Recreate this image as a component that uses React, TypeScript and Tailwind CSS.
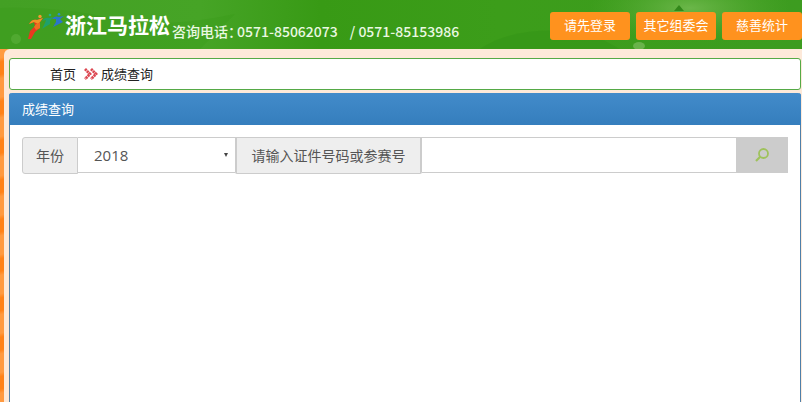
import React from "react";

const navItems = ["请先登录", "其它组委会", "慈善统计"];

function Runners() {
  return (
    <svg viewBox="0 0 37 28" className="h-7 w-[37px] shrink-0" aria-hidden="true">
      <circle cx="12" cy="4.5" r="1.7" fill="#f09a30" />
      <path d="M1 12 C3 8 6 7 9 8 L15 6 L12 10 L12 16 L7 20 L3 27 L0 27 L2 19 L7 14 L6 10 Z" fill="#e8391f" />
      <path d="M1 12 C3 8 6 7 9 8 L15 6 L12 10 L10 12 L6 10 Z" fill="#ee9426" />
      <path d="M8 12 L12 11 L12 16 L8 18 L6 15 Z" fill="#ec7020" />
      <circle cx="22" cy="3" r="1.3" fill="#25b088" />
      <path d="M14 9 C16 6 19 5 21 6 L25 5 L22 9 L22 12 L17 15 L14 17 L17 11 L18 8 Z" fill="#1fa06c" />
      <circle cx="31" cy="2.2" r="1.3" fill="#2b90c8" />
      <path d="M24 7 C26 4 29 4 31 5 L36 4 L32 7 L35 10 L31 12 L25 15 L28 10 L28 7 Z" fill="#2a74cc" />
    </svg>
  );
}

function ChevronsIcon() {
  return (
    <svg viewBox="0 0 14 12" className="h-3 w-3.5" aria-hidden="true" fill="none" stroke="#dc4650" strokeWidth="2.8" strokeDasharray="2.2 0.5">
      <path d="M1 1 L6 6 L1 11" />
      <path d="M7 1 L12 6 L7 11" />
    </svg>
  );
}

function HeaderArt() {
  return (
    <svg className="absolute inset-0 h-full w-full" viewBox="0 0 802 49" preserveAspectRatio="none" aria-hidden="true">
      <defs>
        <linearGradient id="headerBase" x1="0" x2="1" y1="0" y2="0">
          <stop offset="0" stopColor="#43a024" />
          <stop offset="0.25" stopColor="#46a426" />
          <stop offset="0.4" stopColor="#389a15" />
          <stop offset="0.62" stopColor="#3c9d1a" />
          <stop offset="1" stopColor="#3d9c20" />
        </linearGradient>
        <radialGradient id="headerGlow">
          <stop offset="0" stopColor="#70b94e" stopOpacity="0.9" />
          <stop offset="1" stopColor="#55aa32" stopOpacity="0" />
        </radialGradient>
      </defs>
      <rect width="802" height="49" fill="url(#headerBase)" />
      <path d="M0 8 Q60 6 110 18 T235 14 L200 49 H0 Z" fill="#349615" opacity="0.25" />
      <ellipse cx="690" cy="8" rx="100" ry="34" fill="url(#headerGlow)" />
      <path d="M480 49 Q515 24 590 33 L620 49 Z" fill="#2f8e13" opacity="0.3" />
      <path d="M674 11 L679 5 L684 11 Z" fill="#32881a" />
      <ellipse cx="639" cy="46" rx="6" ry="4" fill="#69b34a" />
      <circle cx="16" cy="39" r="5" fill="#5bb03c" opacity="0.6" />
    </svg>
  );
}

export default function App() {
  return (
    <div className="flex min-h-screen flex-col bg-[#ff9433] bg-[repeating-linear-gradient(165deg,#ff9a40_0px,#ff9a40_18px,#ff8218_22px,#ff8218_34px,#ff9a40_38px)] font-['Noto_Sans_CJK_SC',sans-serif]">
      <header className="relative h-[49px] shrink-0 overflow-hidden">
        <HeaderArt />
        <div className="relative flex h-full items-start pl-7 text-white">
          <div className="pt-3">
            <Runners />
          </div>
          <h1 className="w-[107px] pt-2 text-[21px] leading-8 font-bold whitespace-nowrap">浙江马拉松</h1>
          <p className="flex pt-5 text-[14px] leading-[22px] font-medium whitespace-nowrap text-[#eaf8e2]">
            <span className="w-[65px]">咨询电话：</span>
            <span className="pr-3">0571-85062073</span>
            <span>/ 0571-85153986</span>
          </p>
          <nav className="ml-auto flex shrink-0 gap-1.5 pt-3">
            {navItems.map((item) => (
              <button key={item} type="button" className="h-7 w-20 rounded-[3px] bg-[#ff921e] pb-0.5 text-[13px] leading-[26px] whitespace-nowrap text-white">
                {item}
              </button>
            ))}
          </nav>
        </div>
      </header>

      <main className="ml-1 flex grow flex-col gap-[3px] rounded-tl-md bg-[#fde9d9] pt-[9px] pr-px pl-[5px]">
        <nav aria-label="位置" className="flex h-8 shrink-0 items-center rounded-[3px] border border-[#55aa46] bg-white pl-10 text-[13px] text-[#222]">
          <a href="#home">首页</a>
          <span className="pr-[3px] pl-2">
            <ChevronsIcon />
          </span>
          <a href="#results">成绩查询</a>
        </nav>

        <section className="flex grow flex-col rounded-t-[3px] border-x border-[#4f7fa8] bg-white">
          <h2 className="-mx-px h-8 shrink-0 rounded-t-[3px] bg-linear-to-b from-[#428bca] to-[#357ebd] pl-[13px] text-[13px] leading-8 text-white">成绩查询</h2>
          <form className="flex items-start p-3 text-[#555]" onSubmit={(e) => e.preventDefault()}>
            <label htmlFor="year" className="h-[37px] w-14 shrink-0 rounded-l-[3px] border border-[#ccc] bg-[#eee] text-center text-[14px] leading-[34px]">
              年份
            </label>
            <div className="relative w-[157px] shrink-0">
              <select id="year" defaultValue="2018" className="h-9 w-full appearance-none border-y border-[#ccc] bg-white pl-4 font-['Open_Sans',sans-serif] text-[15px] text-[#555] outline-none">
                <option>2018</option>
                <option>2017</option>
              </select>
              <svg viewBox="0 0 4 4" className="pointer-events-none absolute top-4 right-[7px] h-1 w-1" aria-hidden="true">
                <path d="M0 0 H4 L2 4 Z" fill="#444" />
              </svg>
            </div>
            <label htmlFor="number" className="h-[37px] w-[187px] shrink-0 rounded-b-[2px] border border-x-2 border-[#ccc] bg-[#eee] text-center text-[14px] leading-[34px] whitespace-nowrap">
              请输入证件号码或参赛号
            </label>
            <input id="number" type="text" className="h-9 min-w-0 grow border-y border-[#ccc] bg-white px-3 text-[15px] outline-none" />
            <button type="submit" aria-label="查询" className="flex h-9 w-[52px] shrink-0 items-center justify-center bg-[#ccc]">
              <svg viewBox="0 0 14 14" className="h-3.5 w-3.5" aria-hidden="true" fill="none" stroke="#9fc25c">
                <circle cx="8.5" cy="5.5" r="4.5" strokeWidth="1.8" />
                <path d="M5.2 8.8 L1 13" strokeWidth="2.2" />
              </svg>
            </button>
          </form>
        </section>
      </main>
    </div>
  );
}
